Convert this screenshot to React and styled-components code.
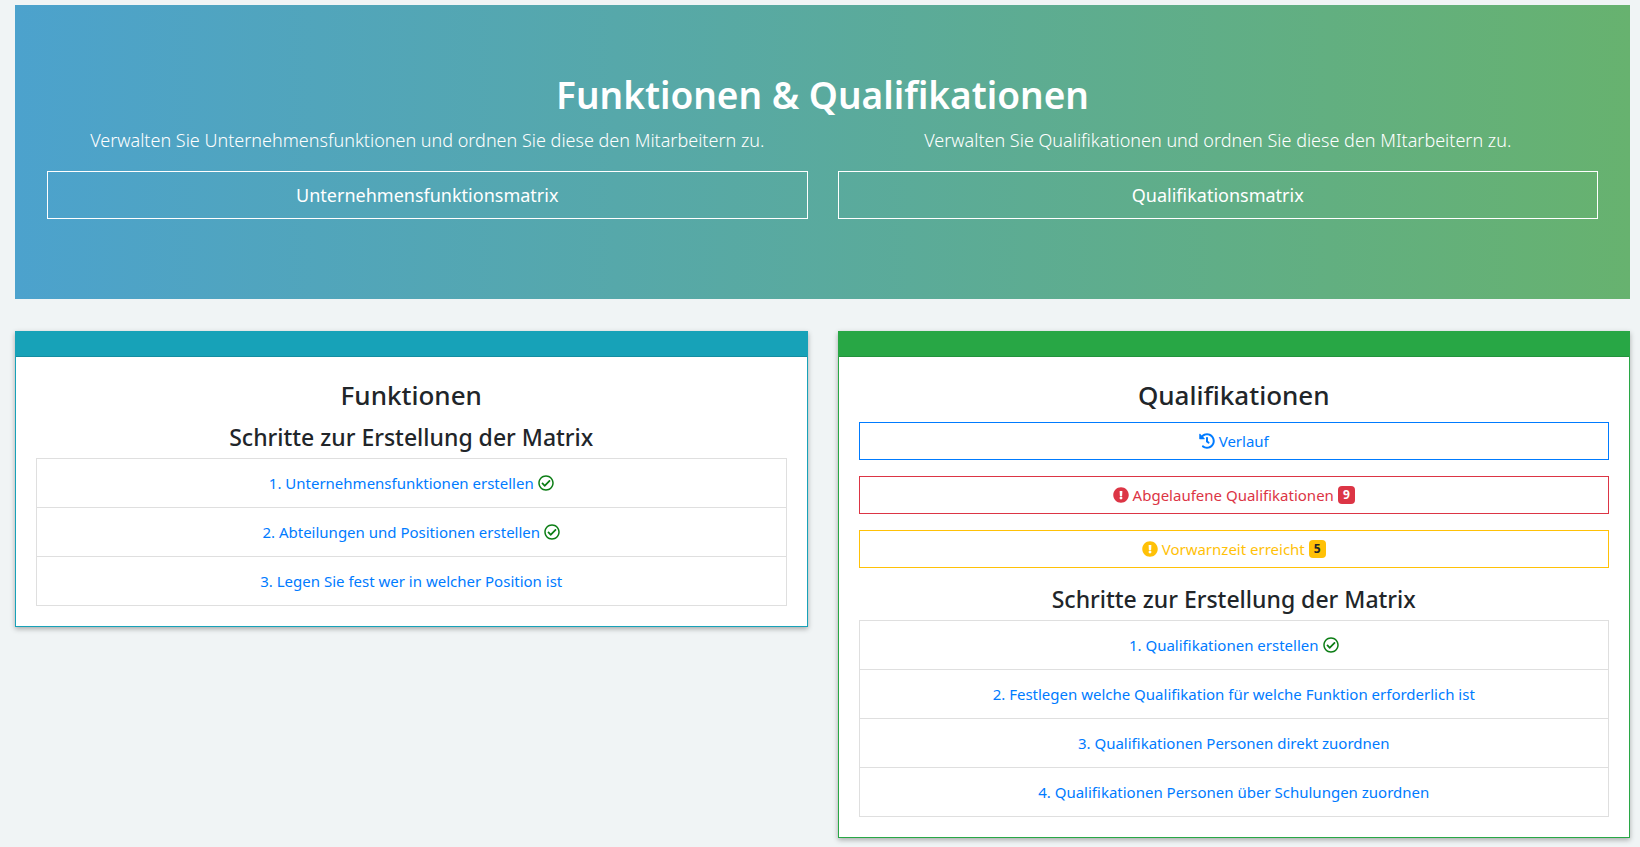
import React from 'react';
import styled, { createGlobalStyle, css } from 'styled-components';
import { FaHistory, FaExclamationCircle, FaRegCheckCircle } from 'react-icons/fa';

const colors = {
  info: '#17a2b8',
  success: '#28a745',
  primary: '#007bff',
  danger: '#dc3545',
  warning: '#ffc107',
  text: '#212529',
  check: '#0b7d14',
};

const GlobalStyle = createGlobalStyle`
  *, *::before, *::after { box-sizing: border-box; }
  body {
    margin: 0;
    background: #f0f4f5;
    color: ${colors.text};
    font-family: "Segoe UI", "Noto Sans", "Open Sans", sans-serif;
    font-size: 15px;
    line-height: 24px;
  }
`;

const Page = styled.main`
  display: flex;
  flex-direction: column;
  gap: 32px;
  padding: 5px 10px 9px 15px;
`;

const Columns = styled.div`
  display: grid;
  grid-template-columns: repeat(2, minmax(0, 1fr));
  align-items: start;
  gap: 30px;

  @media (max-width: 767px) {
    grid-template-columns: minmax(0, 1fr);
  }
`;

const Hero = styled.header`
  padding: 64px 32px 80px;
  background: linear-gradient(to right, #4ca2cd, #67b26f);
  color: #fff;
  text-align: center;
`;

const HeroTitle = styled.h1`
  margin: 0 0 4px;
  font-size: 37px;
  font-weight: 600;
  line-height: 52px;
`;

const Lead = styled.p`
  margin: 0 0 15px;
  font-size: 18px;
  font-weight: 300;
  line-height: 31px;
`;

const Button = styled.button`
  display: flex;
  align-items: center;
  justify-content: center;
  gap: 4px;
  width: 100%;
  min-height: 38px;
  padding: 6px 12px;
  border: 1px solid currentColor;
  background: transparent;
  color: ${(p) => p.$color};
  font: inherit;
  cursor: pointer;

  ${(p) =>
    p.$large &&
    css`
      min-height: 48px;
      padding: 8px 16px;
      font-size: 18px;
    `}

  svg {
    flex: none;
  }
`;

const Badge = styled.span`
  min-width: 17px;
  padding: 3px 5px;
  border-radius: 4px;
  background: ${(p) => p.$background};
  color: ${(p) => p.$color};
  font-size: 12px;
  font-weight: 700;
  line-height: 12px;
  text-align: center;
`;

const Card = styled.section`
  border: 1px solid ${(p) => p.$accent};
  background: #fff;
  box-shadow: 0 2px 5px rgba(0, 0, 0, 0.3);
`;

const CardHeader = styled.div`
  height: 25px;
  border-bottom: 1px solid rgba(0, 0, 0, 0.125);
  background: ${(p) => p.$accent};
`;

const CardBody = styled.div`
  padding: 20px;
  text-align: center;
`;

const CardTitle = styled.h2`
  margin: 0 0 9px;
  font-size: 26px;
  font-weight: 500;
  line-height: 36px;
`;

const StepsTitle = styled.h3`
  margin: 0 0 6px;
  font-size: 23px;
  font-weight: 500;
  line-height: 30px;
`;

const Actions = styled.div`
  display: flex;
  flex-direction: column;
  gap: 16px;
  margin-bottom: 16px;
`;

const StepList = styled.ul`
  margin: 0;
  padding: 0;
  border: 1px solid #dfdfdf;
  list-style: none;
`;

const StepItem = styled.li`
  display: flex;
  align-items: center;
  justify-content: center;
  gap: 4px;
  padding: 12px 20px;

  & + & {
    border-top: 1px solid #dfdfdf;
  }

  svg {
    flex: none;
    color: ${colors.check};
  }
`;

const StepLink = styled.a`
  color: ${colors.primary};
  text-decoration: none;

  &:hover {
    text-decoration: underline;
  }
`;

const functionSteps = [
  { label: '1. Unternehmensfunktionen erstellen', done: true },
  { label: '2. Abteilungen und Positionen erstellen', done: true },
  { label: '3. Legen Sie fest wer in welcher Position ist' },
];

const qualificationSteps = [
  { label: '1. Qualifikationen erstellen', done: true },
  { label: '2. Festlegen welche Qualifikation für welche Funktion erforderlich ist' },
  { label: '3. Qualifikationen Personen direkt zuordnen' },
  { label: '4. Qualifikationen Personen über Schulungen zuordnen' },
];

function Steps({ items }) {
  return (
    <>
      <StepsTitle>Schritte zur Erstellung der Matrix</StepsTitle>
      <StepList>
        {items.map(({ label, done }) => (
          <StepItem key={label}>
            <StepLink href="#">{label}</StepLink>
            {done && <FaRegCheckCircle size={16} aria-hidden="true" />}
          </StepItem>
        ))}
      </StepList>
    </>
  );
}

export default function App() {
  return (
    <>
      <GlobalStyle />
      <Page>
        <Hero>
          <HeroTitle>Funktionen &amp; Qualifikationen</HeroTitle>
          <Columns>
            <div>
              <Lead>Verwalten Sie Unternehmensfunktionen und ordnen Sie diese den Mitarbeitern zu.</Lead>
              <Button type="button" $large $color="#fff">Unternehmensfunktionsmatrix</Button>
            </div>
            <div>
              <Lead>Verwalten Sie Qualifikationen und ordnen Sie diese den MItarbeitern zu.</Lead>
              <Button type="button" $large $color="#fff">Qualifikationsmatrix</Button>
            </div>
          </Columns>
        </Hero>

        <Columns>
          <Card $accent={colors.info}>
            <CardHeader $accent={colors.info} />
            <CardBody>
              <CardTitle>Funktionen</CardTitle>
              <Steps items={functionSteps} />
            </CardBody>
          </Card>

          <Card $accent={colors.success}>
            <CardHeader $accent={colors.success} />
            <CardBody>
              <CardTitle>Qualifikationen</CardTitle>
              <Actions>
                <Button type="button" $color={colors.primary}>
                  <FaHistory size={16} aria-hidden="true" />
                  Verlauf
                </Button>
                <Button type="button" $color={colors.danger}>
                  <FaExclamationCircle size={16} aria-hidden="true" />
                  Abgelaufene Qualifikationen
                  <Badge $background={colors.danger} $color="#fff">9</Badge>
                </Button>
                <Button type="button" $color={colors.warning}>
                  <FaExclamationCircle size={16} aria-hidden="true" />
                  Vorwarnzeit erreicht
                  <Badge $background={colors.warning} $color={colors.text}>5</Badge>
                </Button>
              </Actions>
              <Steps items={qualificationSteps} />
            </CardBody>
          </Card>
        </Columns>
      </Page>
    </>
  );
}
